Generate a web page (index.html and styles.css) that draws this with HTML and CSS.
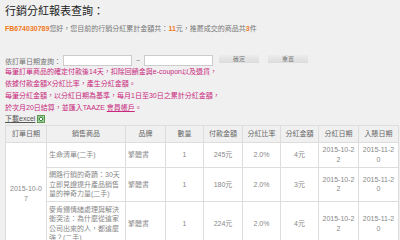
FILE: index.html
```html
<!DOCTYPE html>
<html lang="zh-Hant">
<head>
    <meta charset="UTF-8">
    <title>行銷分紅報表查詢</title>
    <link rel="stylesheet" href="styles.css">
</head>
<body>
    <h1 class="title">行銷分紅報表查詢：</h1>
    <p class="summary">
        <span class="hl">FB674030789</span>您好，您目前的行銷分紅累計金額共：<span class="hl">11</span>元，推薦成交的商品共<span class="hl">3</span>件
    </p>
    <div class="search">
        <span>依訂單日期查詢：</span>
        <input class="date-input" type="text">
        <span class="tilde">~</span>
        <input class="date-input" type="text">
        <button class="btn">確定</button>
        <button class="btn">重置</button>
    </div>
    <div class="notes">
        <p>每筆訂單商品的確定付款後14天，扣除回饋金與e-coupon以及退貨，</p>
        <p>依據付款金額X分紅比率，產生分紅金額。</p>
        <p>每筆分紅金額，以分紅日期為基準，每月1日至30日之累計分紅金額，</p>
        <p>於次月20日結算，並匯入TAAZE <a href="#">會員帳戶</a>。</p>
    </div>
    <div class="download">
        <a href="#">下載excel</a>
        <svg class="xls" width="8" height="8" viewBox="0 0 8 8">
            <rect x="0.5" y="0.5" width="7" height="7" fill="#e8f3e4" stroke="#5a9a4a"/>
            <rect x="1.5" y="1.5" width="5" height="5" fill="#3d8b3d"/>
            <path d="M2.5 2.5 L5.5 5.5 M5.5 2.5 L2.5 5.5" stroke="#fff" stroke-width="1"/>
        </svg>
    </div>
    <table class="report">
        <colgroup>
            <col style="width:41px"><col style="width:79px"><col style="width:40px">
            <col style="width:38px"><col style="width:39px"><col style="width:38px">
            <col style="width:38px"><col style="width:40px"><col style="width:40px">
        </colgroup>
        <tr>
            <th>訂單日期</th><th>銷售商品</th><th>品牌</th><th>數量</th><th>付款金額</th>
            <th>分紅比率</th><th>分紅金額</th><th>分紅日期</th><th>入賬日期</th>
        </tr>
        <tr>
            <td class="order-date" rowspan="3">2015-10-07</td>
            <td class="left">生命清單(二手)</td>
            <td class="left">繁體書</td>
            <td>1</td><td>245元</td><td>2.0%</td><td>4元</td>
            <td>2015-10-22</td><td>2015-11-20</td>
        </tr>
        <tr>
            <td class="left">網路行銷的奇蹟：30天立即見證提升產品銷售量的神奇力量(二手)</td>
            <td class="left">繁體書</td>
            <td>1</td><td>180元</td><td>2.0%</td><td>3元</td>
            <td>2015-10-22</td><td>2015-11-20</td>
        </tr>
        <tr>
            <td class="left">麥肯錫情緒處理與解決衝突法：為什麼從這家公司出來的人，都這麼強？(二手)</td>
            <td class="left">繁體書</td>
            <td>1</td><td>224元</td><td>2.0%</td><td>4元</td>
            <td>2015-10-22</td><td>2015-11-20</td>
        </tr>
    </table>
</body>
</html>
```

FILE: styles.css
```css
body {
    margin: 0;
    padding: 4px 5px;
    background-color: #f0f0f0;
    color: #777;
    font-family: "Liberation Sans", "Noto Sans CJK TC", sans-serif;
    font-size: 7px;
}
p {
    margin: 0;
}
.title {
    margin: 0;
    font-size: 11px;
    line-height: 14px;
    font-weight: normal;
    color: #222;
}
.summary {
    margin-top: 5px;
    line-height: 12px;
}
.hl {
    color: #f07820;
    font-weight: bold;
}
.search {
    display: flex;
    align-items: center;
    margin-top: 20px;
    height: 11px;
}
.date-input {
    width: 67px;
    height: 9px;
    margin: 0 0 0 2px;
    padding: 0;
    border: 1px solid #ccc;
    background-color: white;
}
.tilde {
    margin: 0 2px 0 4px;
}
.btn {
    align-self: flex-start;
    height: 8px;
    width: 40px;
    margin-left: 6px;
    padding: 0;
    border: none;
    background: linear-gradient(#ececec, #dcdcdc);
    color: #777;
    font-family: inherit;
    font-size: 6px;
    line-height: 8px;
}
.btn + .btn {
    margin-left: 9px;
}
.notes {
    color: #c8287d;
    line-height: 12px;
}
.notes a {
    color: #c8287d;
}
.download {
    display: flex;
    align-items: center;
    gap: 2px;
    line-height: 10px;
}
.download a {
    color: #555;
}
.report {
    margin-top: 1px;
    table-layout: fixed;
    width: 393px;
    border-collapse: collapse;
    background-color: white;
}
th, td {
    border: 1px solid #ddd;
    padding: 2.5px 2px;
    line-height: 9.5px;
    text-align: center;
    vertical-align: middle;
    word-break: break-all;
}
th {
    padding: 3px 2px;
    background-color: #f0f0f0;
    color: #666;
    font-weight: normal;
}
td {
    color: #888;
}
td.left {
    text-align: left;
}
td.order-date {
    padding: 0 4px;
}
```
